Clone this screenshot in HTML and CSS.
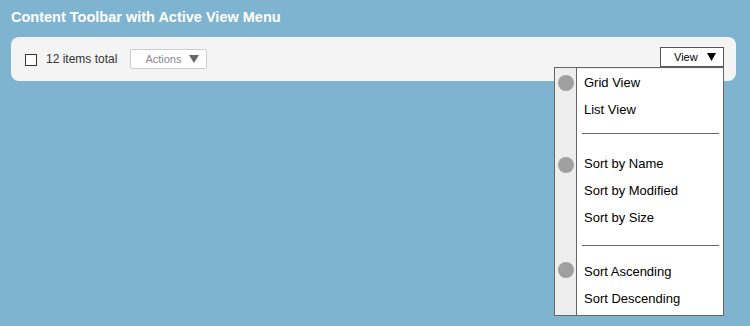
FILE: index.html
```html
<!doctype html>
<html>
<head>
    <meta charset="utf-8">
    <meta name="viewport" content="width=device-width, initial-scale=1.0">
    <title>Content Toolbar</title>
    <link rel="stylesheet" href="styles.css">
</head>
<body>
    <h1 class="title">Content Toolbar with Active View Menu</h1>
    <div class="toolbar">
        <span class="check"></span>
        <span class="count">12 items total</span>
        <button class="actions">Actions
            <svg width="10" height="8" viewBox="0 0 10 8"><polygon points="0,0 10,0 5,8" fill="#666"/></svg>
        </button>
        <div class="view-wrap">
            <button class="view">View
                <svg width="9" height="8" viewBox="0 0 9 8"><polygon points="0,0 9,0 4.5,8" fill="#000"/></svg>
            </button>
            <div class="menu">
                <div class="item"><span class="gutter"><span class="dot"></span></span><span class="label">Grid View</span></div>
                <div class="item"><span class="gutter"></span><span class="label">List View</span></div>
                <div class="item sep sep-first"><span class="gutter"></span><span class="line"></span></div>
                <div class="item"><span class="gutter"><span class="dot"></span></span><span class="label">Sort by Name</span></div>
                <div class="item"><span class="gutter"></span><span class="label">Sort by Modified</span></div>
                <div class="item"><span class="gutter"></span><span class="label">Sort by Size</span></div>
                <div class="item sep sep-second"><span class="gutter"></span><span class="line"></span></div>
                <div class="item"><span class="gutter"><span class="dot dot-up"></span></span><span class="label">Sort Ascending</span></div>
                <div class="item last"><span class="gutter"></span><span class="label">Sort Descending</span></div>
            </div>
        </div>
    </div>
</body>
</html>
```

FILE: styles.css
```css
html, body {
    margin: 0;
    padding: 0;
}
body {
    background-color: #7fb4d0;
    font-family: "Liberation Sans", Arial, sans-serif;
    padding: 9px 14px 0 11px;
    height: 326px;
    box-sizing: border-box;
}
.title {
    margin: 0 0 11px 0;
    font-size: 14.5px;
    line-height: 17px;
    font-weight: bold;
    color: white;
}
.toolbar {
    display: flex;
    align-items: center;
    height: 44px;
    padding: 0 12px 0 14px;
    background-color: #f4f4f4;
    border-radius: 8px;
}
.check {
    width: 10px;
    height: 10px;
    border: 1px solid #333;
    background-color: #fcfcfc;
    margin-top: 1px;
}
.count {
    margin-left: 9px;
    font-size: 12px;
    color: #333;
}
button {
    font-family: "Liberation Sans", Arial, sans-serif;
    font-size: 11px;
    display: flex;
    align-items: center;
    height: 20px;
    margin: 0;
    background-color: white;
    box-sizing: border-box;
}
.actions {
    margin-left: 13px;
    width: 77px;
    padding: 0 0 0 14px;
    color: #888;
    border: 1px solid #ccc;
    border-radius: 2px;
}
.actions svg {
    margin-left: 8px;
}
.view-wrap {
    position: relative;
    margin-left: auto;
    align-self: flex-start;
    margin-top: 10px;
}
.view {
    width: 64px;
    padding: 0 0 0 13px;
    color: #000;
    border: 1px solid #555;
    border-radius: 0;
}
.view svg {
    margin-left: 9px;
}
.menu {
    position: absolute;
    top: 100%;
    right: 0;
    width: 170px;
    box-sizing: border-box;
    border: 1px solid #666;
    background-color: white;
    font-size: 13px;
    color: #000;
}
.item {
    display: flex;
    height: 27px;
}
.item:first-child {
    border-top: 1px solid #eee;
}
.item:first-child .gutter {
    margin-top: -1px;
}
.item.last {
    height: 30px;
}
.item.last .label {
    padding-bottom: 3px;
}
.gutter {
    width: 21px;
    flex-shrink: 0;
    background-color: #eee;
    border-right: 1px solid #666;
    display: flex;
    align-items: center;
    justify-content: center;
}
.dot {
    width: 16px;
    height: 16px;
    border-radius: 50%;
    background-color: #a0a0a0;
    margin-top: 2px;
}
.dot-up {
    margin-top: -4px;
}
.label {
    padding-left: 7px;
    line-height: 27px;
    white-space: nowrap;
}
.line {
    flex-grow: 1;
    height: 1px;
    margin: 0 4px 0 5px;
    background-color: #666;
}
.sep-first .line {
    margin-top: 10px;
}
.sep-second .line {
    margin-top: 14px;
}
```
